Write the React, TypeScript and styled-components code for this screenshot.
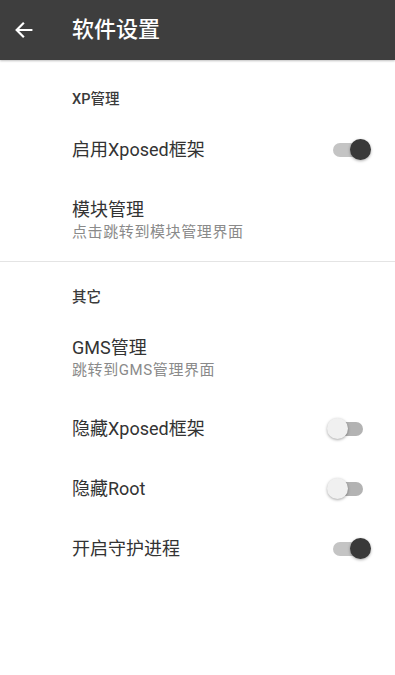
import React from "react";
import { styled, createGlobalStyle } from "styled-components";

const GlobalStyle = createGlobalStyle`
  html, body {
    margin: 0;
    padding: 0;
    background: #fff;
  }
  body {
    font-family: Roboto, "Noto Sans CJK SC", sans-serif;
    -webkit-font-smoothing: antialiased;
  }
`;

const Page = styled.div`
  width: 395px;
  min-height: 675px;
  background: #fff;
`;

const Toolbar = styled.header`
  display: flex;
  align-items: center;
  height: 60px;
  background-color: #3e3e3e;
  box-shadow: 0 1px 2px rgba(0, 0, 0, 0.25);
`;

const BackButton = styled.button`
  display: flex;
  align-items: center;
  justify-content: center;
  width: 46px;
  height: 60px;
  padding: 0 0 0 2px;
  margin-right: 26px;
  background: transparent;
  border: 0;
`;

const Title = styled.h1`
  margin: 0;
  color: #fff;
  font-size: 22px;
  font-weight: 500;
  line-height: 60px;
`;

const Category = styled.div<{ $top: number }>`
  padding: ${p => p.$top}px 0 10px 72px;
  color: #3a3a3a;
  font-size: 14.5px;
  font-weight: 500;
  line-height: 20px;
`;

const Row = styled.div<{ $tall?: boolean }>`
  display: flex;
  align-items: center;
  box-sizing: border-box;
  height: ${p => (p.$tall ? 81 : 60)}px;
  padding: 0 32px 0 72px;
`;

const Texts = styled.div`
  flex: 1;
  display: flex;
  flex-direction: column;
`;

const Primary = styled.div`
  color: #333;
  font-size: 18px;
  line-height: 22px;
`;

const Secondary = styled.div`
  color: #8a8a8a;
  font-size: 15px;
  line-height: 22px;
  letter-spacing: 0.6px;
`;

const Divider = styled.div`
  height: 1px;
  background: #e4e4e4;
`;

const Track = styled.div<{ $on: boolean }>`
  position: relative;
  width: 30px;
  height: 14px;
  border-radius: 7px;
  background: ${p => (p.$on ? "#c4c4c4" : "#b3b3b3")};
`;

const Thumb = styled.div<{ $on: boolean }>`
  position: absolute;
  top: -4px;
  left: ${p => (p.$on ? 17 : -6)}px;
  width: 21px;
  height: 21px;
  border-radius: 50%;
  background: ${p => (p.$on ? "#393939" : "#f0f0f0")};
  box-shadow: 0 1px 3px rgba(0, 0, 0, 0.35);
`;

function Switch({ on }: { on: boolean }) {
  return (
    <Track $on={on}>
      <Thumb $on={on} />
    </Track>
  );
}

function ArrowBack() {
  return (
    <svg width="22" height="22" viewBox="0 0 24 24">
      <path
        d="M20 12H5M11 5l-7 7 7 7"
        fill="none"
        stroke="#fff"
        strokeWidth="2.4"
        strokeLinecap="square"
      />
    </svg>
  );
}

export default function App() {
  return (
    <Page>
      <GlobalStyle />
      <Toolbar>
        <BackButton>
          <ArrowBack />
        </BackButton>
        <Title>软件设置</Title>
      </Toolbar>

      <Category $top={30}>XP管理</Category>
      <Row>
        <Texts>
          <Primary>启用Xposed框架</Primary>
        </Texts>
        <Switch on />
      </Row>
      <Row $tall>
        <Texts>
          <Primary>模块管理</Primary>
          <Secondary>点击跳转到模块管理界面</Secondary>
        </Texts>
      </Row>
      <Divider />

      <Category $top={26}>其它</Category>
      <Row $tall>
        <Texts>
          <Primary>GMS管理</Primary>
          <Secondary>跳转到GMS管理界面</Secondary>
        </Texts>
      </Row>
      <Row>
        <Texts>
          <Primary>隐藏Xposed框架</Primary>
        </Texts>
        <Switch on={false} />
      </Row>
      <Row>
        <Texts>
          <Primary>隐藏Root</Primary>
        </Texts>
        <Switch on={false} />
      </Row>
      <Row>
        <Texts>
          <Primary>开启守护进程</Primary>
        </Texts>
        <Switch on />
      </Row>
    </Page>
  );
}
